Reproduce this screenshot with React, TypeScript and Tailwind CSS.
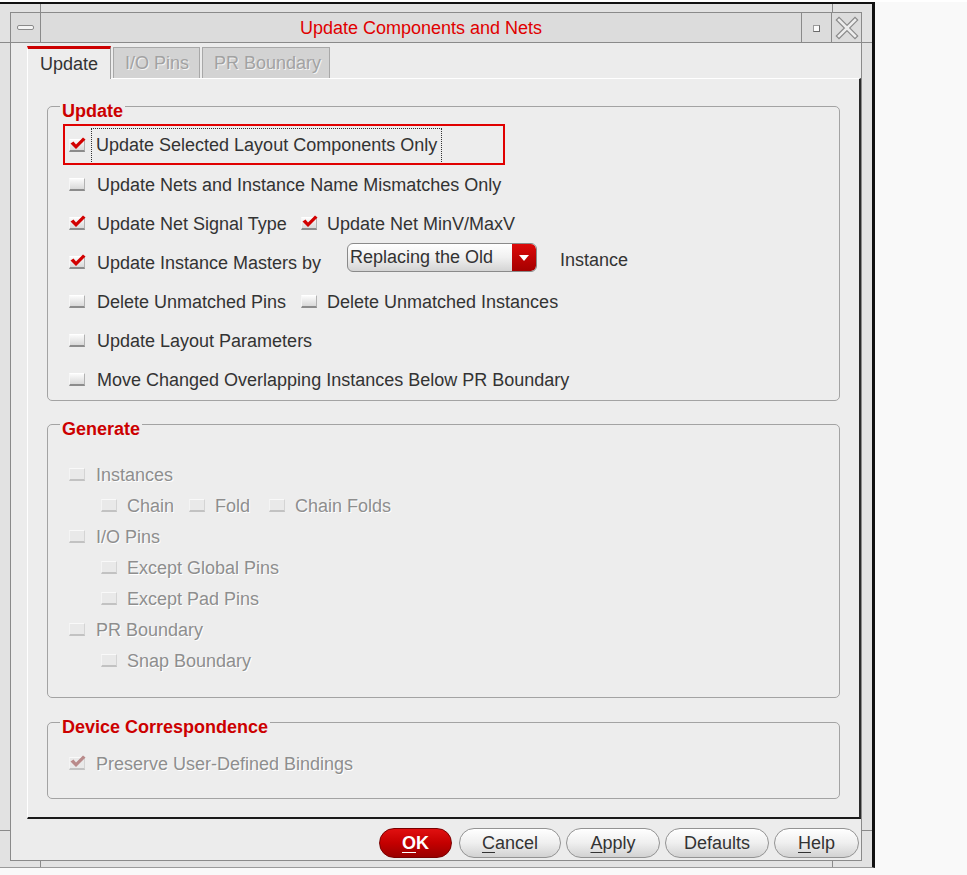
import type { ReactNode } from 'react'

// ── Checkbox ──────────────────────────────────────────────────────────────────
function Box({ checked, disabled }: { checked?: boolean; disabled?: boolean }) {
  return (
    <span
      className={`relative inline-block h-[13px] w-[16px] shrink-0 border-t border-l border-r border-b-2 ${
        disabled
          ? 'border-t-[#f9f9f9] border-l-[#f4f4f4] border-r-[#d4d4d4] border-b-[#c2c2c2] bg-[#e9e9e9]'
          : 'border-t-white border-l-[#f6f6f6] border-r-[#b2b2b2] border-b-[#8c8c8c] bg-gradient-to-b from-[#fbfbfb] to-[#d9d9d9]'
      }`}
    >
      {checked && (
        <svg viewBox="0 0 16 13" className="absolute -top-[3px] left-[0px] h-[13px] w-[16px]">
          <polygon
            points="0.5,6.5 3.5,4.5 6,7.5 13,0.5 15.5,2.5 6,12"
            fill={disabled ? '#b98a8a' : '#d20000'}
          />
        </svg>
      )}
    </span>
  )
}

function Label({ children, disabled }: { children: ReactNode; disabled?: boolean }) {
  return (
    <span
      className={`whitespace-nowrap text-[18px] leading-none ${
        disabled ? 'text-[#8e8e8e] [text-shadow:1px_1px_0_#ffffff]' : 'text-[#333333]'
      }`}
    >
      {children}
    </span>
  )
}

function Group({ title, className, children }: { title: string; className: string; children: ReactNode }) {
  return (
    <div className={`relative rounded-[5px] border border-[#a3a3a3] ${className}`}>
      <span className="absolute -top-[5px] left-[12px] bg-[#ededed] px-[2px] text-[18px] font-bold leading-[18px] text-[#cc0000]">
        {title}
      </span>
      {children}
    </div>
  )
}

function Btn({ w, children, primary }: { w: string; children: ReactNode; primary?: boolean }) {
  return (
    <button
      className={`h-[30px] rounded-full border text-[18px] leading-none ${w} ${
        primary
          ? 'border-[#7a0000] bg-gradient-to-b from-[#e01010] via-[#c40000] to-[#9a0000] font-bold text-white'
          : 'border-[#939393] bg-gradient-to-b from-[#ffffff] via-[#efefef] to-[#d2d2d2] text-[#333333]'
      }`}
    >
      {children}
    </button>
  )
}

// ── Main ──────────────────────────────────────────────────────────────────────
export default function App() {
  return (
    <div className="h-[875px] w-[967px] bg-[#f9f9f9] font-['Liberation_Sans',Arial,sans-serif]">
      <div className="relative mt-[2px] w-[875px] border-t-2 border-r-[3px] border-b border-t-[#111111] border-r-[#111111] border-b-[#9a9a9a] bg-[#e2e2e2] px-[10px] pt-[8px] pb-[6px]">
        {/* frame handle marks */}
        <span className="absolute left-[40px] top-0 h-[8px] w-px bg-[#8a8a8a]" />
        <span className="absolute left-[832px] top-0 h-[8px] w-px bg-[#8a8a8a]" />
        <span className="absolute left-0 top-[38px] h-px w-[10px] bg-[#8a8a8a]" />
        <span className="absolute right-0 top-[38px] h-px w-[10px] bg-[#8a8a8a]" />
        <span className="absolute bottom-0 left-[40px] h-[6px] w-px bg-[#8a8a8a]" />
        <span className="absolute bottom-0 left-[832px] h-[6px] w-px bg-[#8a8a8a]" />
        <span className="absolute left-0 top-[826px] h-px w-[10px] bg-[#8a8a8a]" />
        <span className="absolute right-0 top-[826px] h-px w-[10px] bg-[#8a8a8a]" />

        <div className="flex flex-col border border-[#8a8a8a]">
          {/* Title bar */}
          <div className="flex h-[30px] border-b border-[#8a8a8a] bg-[#dcdcdc]">
            <div className="flex w-[30px] items-center justify-center border-r border-[#8a8a8a]">
              <span className="h-[5px] w-[17px] rounded-[2px] border border-[#8a8a8a] bg-[#f4f4f4]" />
            </div>
            <div className="flex flex-1 items-center justify-center text-[18px] leading-none text-[#e00000]">
              Update Components and Nets
            </div>
            <div className="flex w-[30px] items-center justify-center border-l border-[#8a8a8a]">
              <span className="mt-[2px] h-[7px] w-[7px] border border-t-[#9a9a9a] border-l-[#9a9a9a] border-r-[#6a6a6a] border-b-[#6a6a6a] bg-[#fafafa]" />
            </div>
            <div className="flex w-[30px] items-center justify-center border-l border-[#8a8a8a]">
              <svg viewBox="0 0 24 24" className="h-[24px] w-[24px]">
                <path d="M4 4 L20 20 M20 4 L4 20" stroke="#8a8a8a" strokeWidth="5" strokeLinecap="square" />
                <path d="M4 4 L20 20 M20 4 L4 20" stroke="#ececec" strokeWidth="2.6" strokeLinecap="square" />
              </svg>
            </div>
          </div>

          {/* Body */}
          <div className="bg-[#ececec] pl-[16px] pt-[3px] pb-[2px]">
            {/* Tabs */}
            <div className="flex h-[32px] items-end gap-[2px]">
              <div className="relative z-10 -mb-px flex h-[33px] w-[84px] items-center border-t-[3px] border-l border-r border-t-[#cc0000] border-l-white border-r-[#a0a0a0] bg-[#ededed] pl-[12px] text-[18px] leading-none text-[#333333]">
                Update
              </div>
              <div className="flex h-[31px] w-[87px] items-center border border-b-0 border-[#a8a8a8] bg-[#d3d3d3] pl-[11px] text-[18px] leading-none text-[#a2a2a2] [text-shadow:1px_1px_0_#f4f4f4]">
                I/O Pins
              </div>
              <div className="flex h-[31px] w-[128px] items-center border border-b-0 border-[#a8a8a8] bg-[#d3d3d3] pl-[11px] text-[18px] leading-none text-[#a2a2a2] [text-shadow:1px_1px_0_#f4f4f4]">
                PR Boundary
              </div>
            </div>

            {/* Panel */}
            <div className="flex flex-col gap-0 border-t border-l border-r-2 border-b-2 border-t-white border-l-white border-r-[#2a2a2a] border-b-[#1a1a1a] bg-[#ededed] px-[19px] pt-[27px] pb-[18px]">
              <Group title="Update" className="pt-[19px] pb-px">
                <div className="pointer-events-none absolute left-[15px] top-[17px] h-[41px] w-[442px] border-2 border-[#e00000]" />
                <div className="flex h-[39px] items-center pl-[21px]">
                  <Box checked />
                  <span className="ml-[6px] border border-dotted border-[#333333] px-[4px] py-[5px]">
                    <Label>Update Selected Layout Components Only</Label>
                  </span>
                </div>
                <div className="flex h-[39px] items-center gap-[12px] pl-[21px]">
                  <Box />
                  <Label>Update Nets and Instance Name Mismatches Only</Label>
                </div>
                <div className="flex h-[39px] items-center pl-[21px]">
                  <div className="flex w-[232px] items-center gap-[12px]">
                    <Box checked />
                    <Label>Update Net Signal Type</Label>
                  </div>
                  <div className="flex items-center gap-[10px]">
                    <Box checked />
                    <Label>Update Net MinV/MaxV</Label>
                  </div>
                </div>
                <div className="flex h-[39px] items-center pl-[21px]">
                  <div className="flex w-[278px] items-center gap-[12px]">
                    <Box checked />
                    <Label>Update Instance Masters by</Label>
                  </div>
                  <div className="flex h-[29px] w-[190px] self-start overflow-hidden rounded-[6px] border border-[#8a8a8a] bg-gradient-to-b from-white via-[#f0f0f0] to-[#d4d4d4]">
                    <span className="flex-1 pl-[2px] text-[18px] leading-[27px] text-[#333333]">Replacing the Old</span>
                    <span className="flex w-[24px] items-center justify-center rounded-r-[5px] bg-gradient-to-b from-[#dc0a0a] to-[#a50000]">
                      <svg viewBox="0 0 10 6" className="h-[6px] w-[10px]">
                        <polygon points="0,0 10,0 5,6" fill="#ffffff" />
                      </svg>
                    </span>
                  </div>
                  <span className="ml-[23px] -mt-[3px]">
                    <Label>Instance</Label>
                  </span>
                </div>
                <div className="flex h-[39px] items-center pl-[21px]">
                  <div className="flex w-[232px] items-center gap-[12px]">
                    <Box />
                    <Label>Delete Unmatched Pins</Label>
                  </div>
                  <div className="flex items-center gap-[10px]">
                    <Box />
                    <Label>Delete Unmatched Instances</Label>
                  </div>
                </div>
                <div className="flex h-[39px] items-center gap-[12px] pl-[21px]">
                  <Box />
                  <Label>Update Layout Parameters</Label>
                </div>
                <div className="flex h-[39px] items-center gap-[12px] pl-[21px]">
                  <Box />
                  <Label>Move Changed Overlapping Instances Below PR Boundary</Label>
                </div>
              </Group>

              <Group title="Generate" className="mt-[23px] pt-[34px] pb-[21px]">
                <div className="flex h-[31px] items-center gap-[11px] pl-[21px]">
                  <Box disabled />
                  <Label disabled>Instances</Label>
                </div>
                <div className="flex h-[31px] items-center pl-[53px]">
                  <div className="flex w-[88px] items-center gap-[10px]">
                    <Box disabled />
                    <Label disabled>Chain</Label>
                  </div>
                  <div className="flex w-[80px] items-center gap-[10px]">
                    <Box disabled />
                    <Label disabled>Fold</Label>
                  </div>
                  <div className="flex items-center gap-[10px]">
                    <Box disabled />
                    <Label disabled>Chain Folds</Label>
                  </div>
                </div>
                <div className="flex h-[31px] items-center gap-[11px] pl-[21px]">
                  <Box disabled />
                  <Label disabled>I/O Pins</Label>
                </div>
                <div className="flex h-[31px] items-center gap-[10px] pl-[53px]">
                  <Box disabled />
                  <Label disabled>Except Global Pins</Label>
                </div>
                <div className="flex h-[31px] items-center gap-[10px] pl-[53px]">
                  <Box disabled />
                  <Label disabled>Except Pad Pins</Label>
                </div>
                <div className="flex h-[31px] items-center gap-[11px] pl-[21px]">
                  <Box disabled />
                  <Label disabled>PR Boundary</Label>
                </div>
                <div className="flex h-[31px] items-center gap-[10px] pl-[53px]">
                  <Box disabled />
                  <Label disabled>Snap Boundary</Label>
                </div>
              </Group>

              <Group title="Device Correspondence" className="mt-[24px] pt-[25px] pb-[19px]">
                <div className="flex h-[31px] items-center gap-[11px] pl-[21px]">
                  <Box checked disabled />
                  <Label disabled>Preserve User-Defined Bindings</Label>
                </div>
              </Group>
            </div>

            {/* Buttons */}
            <div className="mt-[9px] flex h-[30px] justify-end gap-[5px] pr-[2px]">
              <Btn w="w-[73px] mr-[2px]" primary>
                <span className="underline underline-offset-[3px]">O</span>K
              </Btn>
              <Btn w="w-[102px]">
                <span className="underline underline-offset-[3px]">C</span>ancel
              </Btn>
              <Btn w="w-[94px]">
                <span className="underline underline-offset-[3px]">A</span>pply
              </Btn>
              <Btn w="w-[104px]">Defaults</Btn>
              <Btn w="w-[85px]">
                <span className="underline underline-offset-[3px]">H</span>elp
              </Btn>
            </div>
          </div>
        </div>
      </div>
    </div>
  )
}
